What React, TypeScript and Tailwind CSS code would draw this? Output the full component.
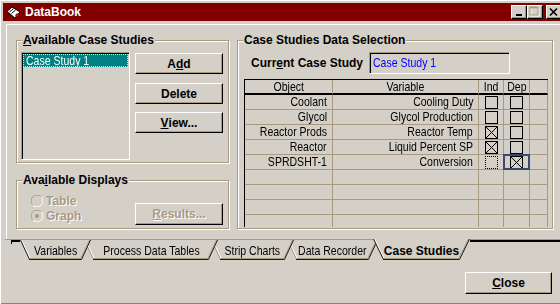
import React from "react";

type O = "l" | "r" | "c";

function Nar({ children, o = "r", className = "" }: { children: React.ReactNode; o?: O; className?: string }) {
  const oc = o === "l" ? "origin-left" : o === "c" ? "origin-center" : "origin-right";
  return (
    <span className={`inline-block whitespace-nowrap text-[13px] leading-[14px] scale-x-[0.81] ${oc} ${className}`}>
      {children}
    </span>
  );
}

function Group({ title, className = "", children }: { title: React.ReactNode; className?: string; children?: React.ReactNode }) {
  return (
    <div className={`relative border border-[#a89a80] shadow-[inset_1px_1px_0_#fff,1px_1px_0_#fff] ${className}`}>
      <div className="absolute left-[5px] -top-[8px] px-[1px] bg-[#d4d0c8] text-[12px] font-bold leading-[15px] whitespace-nowrap">
        {title}
      </div>
      {children}
    </div>
  );
}

function Btn({ children, className = "" }: { children: React.ReactNode; className?: string }) {
  return (
    <div
      className={`flex items-center justify-center border border-t-white border-l-white border-r-black border-b-black shadow-[inset_-1px_-1px_0_#a89a80] text-[12px] font-bold leading-none ${className}`}
    >
      {children}
    </div>
  );
}

function Check({ state }: { state: "off" | "on" | "dot" }) {
  if (state === "dot") return <div className="w-[13px] h-[13px] border border-dotted border-black" />;
  return (
    <div className="w-[13px] h-[13px] border border-black">
      {state === "on" && (
        <svg width="11" height="11" viewBox="0 0 11 11" className="block">
          <path d="M0 0L11 11M11 0L0 11" stroke="#000" strokeWidth="1" />
        </svg>
      )}
    </div>
  );
}

function Radio({ on }: { on?: boolean }) {
  return (
    <svg width="12" height="12" viewBox="0 0 12 12" className="block">
      <path d="M10.2 1.8 A5.5 5.5 0 0 0 1.8 10.2" stroke="#a89a80" fill="none" />
      <path d="M1.8 10.2 A5.5 5.5 0 0 0 10.2 1.8" stroke="#ffffff" fill="none" />
      {on && <circle cx="6" cy="6" r="2" fill="#a89a80" />}
    </svg>
  );
}

function TitleBtn({ children }: { children: React.ReactNode }) {
  return (
    <div className="w-[16px] h-[14px] shrink-0 bg-[#d4d0c8] border border-t-white border-l-white border-r-black border-b-black shadow-[inset_-1px_-1px_0_#a89a80]">
      {children}
    </div>
  );
}

function TabShape({ w, active, darkLeft }: { w: number; active?: boolean; darkLeft?: boolean }) {
  const s = active ? 10 : 9;
  const t = active ? 0 : 1;
  return (
    <svg className="absolute left-0 top-0" width={w} height={21} viewBox={`0 0 ${w} 21`}>
      <polygon points={`0,${t} ${s},21 ${w - s},21 ${w},${t}`} fill="#d4d0c8" />
      <path d={`M1.5 ${t} L${s + 1.3} 19.5`} stroke="#ffffff" fill="none" />
      <path d={`M${s + 1} 19.5 L${w - s - 1} 19.5 M${w - s - 1.3} 19.5 L${w - 1.5} ${t}`} stroke="#a89a80" fill="none" />
      {darkLeft ? (
        <path d={`M0.5 ${t} L${s + 0.5} 20.5`} stroke="#1a1a1a" fill="none" />
      ) : (
        <path d={`M0.5 ${t} L${s + 0.5} 20.5`} stroke="#a89a80" fill="none" />
      )}
      <path d={`M${s} 20.5 L${w - s - 0.5} 20.5 L${w - 0.5} ${t}`} stroke="#1a1a1a" fill="none" />
    </svg>
  );
}

const TABS = [
  { label: "Variables", w: 71, cls: "w-[71px] z-[4]", dark: true },
  { label: "Process Data Tables", w: 134, cls: "w-[134px] -ml-[7px] z-[3]", dark: false },
  { label: "Strip Charts", w: 83, cls: "w-[83px] -ml-[7px] z-[2]", dark: false },
  { label: "Data Recorder", w: 91, cls: "w-[91px] -ml-[7px] z-[1]", dark: false },
];

type Row = { obj: string; v: string; ind: "off" | "on" | "dot"; dep: "off" | "on" | "dot"; focus?: boolean };

const ROWS: Row[] = [
  { obj: "Coolant", v: "Cooling Duty", ind: "off", dep: "off" },
  { obj: "Glycol", v: "Glycol Production", ind: "off", dep: "off" },
  { obj: "Reactor Prods", v: "Reactor Temp", ind: "on", dep: "off" },
  { obj: "Reactor", v: "Liquid Percent SP", ind: "on", dep: "off" },
  { obj: "SPRDSHT-1", v: "Conversion", ind: "dot", dep: "on", focus: true },
];

const cell = "h-[15px] border-b border-r border-[#a89a80] flex items-center";

export default function App() {
  const empty = [0, 1, 2, 3];
  return (
    <div className="w-[560px] h-[304px] overflow-hidden bg-[#d4d0c8] pl-[3px] pt-[3px] font-['Liberation_Sans',Arial,sans-serif] text-black shadow-[inset_1px_1px_0_#fff,inset_0_-1px_0_#8c8270] select-none">
      {/* Title bar */}
      <div className="w-[557px] h-[18px] bg-[#800000] flex items-center overflow-hidden">
        <svg className="ml-[3px] shrink-0" width="15" height="13" viewBox="0 0 15 13">
          <polygon points="1,5.5 6,1 14,6 9,12" fill="#fff" stroke="#000" strokeWidth="1" />
          <path d="M3.5 6 L7.5 2.5 M5.5 7.5 L9.5 4" stroke="#000" strokeWidth="1" />
          <circle cx="11.5" cy="9.5" r="1.8" fill="#ff0000" stroke="#000" strokeWidth="0.6" />
        </svg>
        <span className="ml-[4px] text-white text-[12px] font-bold leading-none">DataBook</span>
        <div className="ml-auto flex items-center -mr-[2px]">
          <TitleBtn>
            <svg width="14" height="12" className="block">
              <rect x="4" y="8" width="6" height="2" fill="#000" />
            </svg>
          </TitleBtn>
          <TitleBtn>
            <svg width="14" height="12" className="block">
              <rect x="3" y="2" width="8" height="8" fill="none" stroke="#fff" />
              <rect x="2" y="1" width="8" height="8" fill="none" stroke="#a89a80" />
              <rect x="2" y="1" width="8" height="1.5" fill="#a89a80" />
            </svg>
          </TitleBtn>
          <div className="ml-[3px]">
            <TitleBtn>
              <svg width="14" height="12" className="block">
                <path d="M3 2.5 L10 9.5 M10 2.5 L3 9.5" stroke="#000" strokeWidth="1.6" />
              </svg>
            </TitleBtn>
          </div>
        </div>
      </div>

      {/* Tab page panel */}
      <div className="ml-[3px] mt-[3px] w-[554px] h-[215px] border-t border-l border-white flex items-start pl-[9px] pt-[15px]">
        <div className="flex flex-col w-[213px] shrink-0">
          <Group
            className="w-[213px] h-[123px]"
            title={
              <>
                <span className="underline">A</span>vailable Case Studies
              </>
            }
          >
            <div className="flex items-start pl-[4px] pt-[11px]">
              <div className="w-[109px] h-[108px] border border-t-[#a89a80] border-l-[#a89a80] border-r-white border-b-white shadow-[inset_1px_1px_0_#000] p-[1px]">
                <div className="h-[13px] bg-[#008080] text-white pl-[3px] outline-1 outline-dotted outline-[#e8e8a0] -outline-offset-1 flex items-center">
                  <Nar o="l">Case Study 1</Nar>
                </div>
              </div>
              <div className="ml-[5px] mt-[1px] flex flex-col">
                <Btn className="w-[88px] h-[21px]">
                  A<span className="underline">d</span>d
                </Btn>
                <Btn className="w-[88px] h-[21px] mt-[9px]">Delete</Btn>
                <Btn className="w-[88px] h-[21px] mt-[8px]">
                  <span className="underline">V</span>iew...
                </Btn>
              </div>
            </div>
          </Group>

          <Group
            className="w-[213px] h-[49px] mt-[17px]"
            title={
              <>
                Ava<span className="underline">i</span>lable Displays
              </>
            }
          >
            <div className="flex items-start">
              <div className="w-[118px] pl-[14px] pt-[12px] flex flex-col text-[12px] font-bold text-[#a89a80] [text-shadow:1px_1px_0_#fff]">
                <div className="h-[15px] flex items-center">
                  <Radio />
                  <span className="ml-[3px]">Table</span>
                </div>
                <div className="h-[15px] flex items-center">
                  <Radio on />
                  <span className="ml-[3px]">Graph</span>
                </div>
              </div>
              <Btn className="w-[88px] h-[22px] mt-[22px] text-[#a89a80] [text-shadow:1px_1px_0_#fff]">
                <span className="underline">R</span>esults...
              </Btn>
            </div>
          </Group>
        </div>

        <Group className="ml-[8px] w-[316px] h-[189px] shrink-0" title="Case Studies Data Selection">
          <div className="flex items-center pl-[13px] pt-[11px]">
            <span className="w-[118px] shrink-0 text-[12px] font-bold whitespace-nowrap">
              Curr<span className="underline">e</span>nt Case Study
            </span>
            <div className="w-[141px] h-[22px] border border-t-[#a89a80] border-l-[#a89a80] border-r-white border-b-white shadow-[inset_1px_1px_0_#000] flex items-center pl-[3px]">
              <Nar o="l" className="text-[#0000ff]">
                Case Study 1
              </Nar>
            </div>
          </div>

          <div className="ml-[6px] mt-[5px] w-[304px] h-[148px] overflow-hidden border-t border-l border-black grid grid-cols-[88px_146px_25px_26px_18px] content-start">
            {/* header */}
            <div className="h-[15px] border-b-2 border-b-black border-r border-r-[#a89a80] flex items-center justify-center">
              <Nar o="c" className="leading-[13px]">Object</Nar>
            </div>
            <div className="h-[15px] border-b-2 border-b-black border-r border-r-[#a89a80] flex items-center justify-center">
              <Nar o="c" className="leading-[13px]">Variable</Nar>
            </div>
            <div className="h-[15px] border-b-2 border-b-black border-r border-r-[#a89a80] flex items-center justify-center">
              <Nar o="c" className="leading-[13px]">Ind</Nar>
            </div>
            <div className="h-[15px] border-b-2 border-b-black border-r border-r-[#a89a80] flex items-center justify-center">
              <Nar o="c" className="leading-[13px]">Dep</Nar>
            </div>
            <div className="h-[15px] border-b-2 border-b-black border-r border-r-[#a89a80]" />

            {ROWS.map((r) => (
              <React.Fragment key={r.obj}>
                <div className={`${cell} justify-end pr-[5px]`}>
                  <Nar>{r.obj}</Nar>
                </div>
                <div className={`${cell} justify-end pr-[5px]`}>
                  <Nar>{r.v}</Nar>
                </div>
                <div className={`${cell} justify-center`}>
                  <Check state={r.ind} />
                </div>
                <div className={`${cell} justify-center relative`}>
                  <Check state={r.dep} />
                  {r.focus && <div className="absolute -inset-[1px] border-2 border-[#3a4a6e] z-10" />}
                </div>
                <div className={cell} />
              </React.Fragment>
            ))}
            {empty.map((i) => (
              <React.Fragment key={`e${i}`}>
                <div className={cell} />
                <div className={cell} />
                <div className={cell} />
                <div className={cell} />
                <div className={cell} />
              </React.Fragment>
            ))}
          </div>
        </Group>
      </div>

      {/* Tab strip */}
      <div className="relative w-[557px] h-[22px]">
        <svg className="absolute left-0 top-0" width="557" height="22">
          <line x1="2" y1="0.5" x2="557" y2="0.5" stroke="#a89a80" />
          <rect x="8" y="1" width="9" height="2" fill="#000" />
          <rect x="8" y="1" width="1" height="4" fill="#000" />
          <rect x="467" y="1" width="90" height="2" fill="#000" />
        </svg>
        <div className="relative flex pl-[17px]">
          {TABS.map((t) => (
            <div key={t.label} className={`relative h-[21px] shrink-0 ${t.cls}`}>
              <TabShape w={t.w} darkLeft={t.dark} />
              <div className="relative flex justify-center pt-[4px]">
                <Nar o="c" className="leading-[16px]">{t.label}</Nar>
              </div>
            </div>
          ))}
          <div className="relative h-[21px] w-[97px] shrink-0 -ml-[5px] z-[5]">
            <TabShape w={97} active darkLeft />
            <div className="relative flex justify-center pt-[4px] text-[12px] font-bold leading-[16px] whitespace-nowrap">
              Case Studies
            </div>
          </div>
        </div>
      </div>

      {/* Close */}
      <div className="flex justify-end pr-[8px] mt-[11px]">
        <Btn className="w-[87px] h-[22px]">
          <span className="underline">C</span>lose
        </Btn>
      </div>
    </div>
  );
}
